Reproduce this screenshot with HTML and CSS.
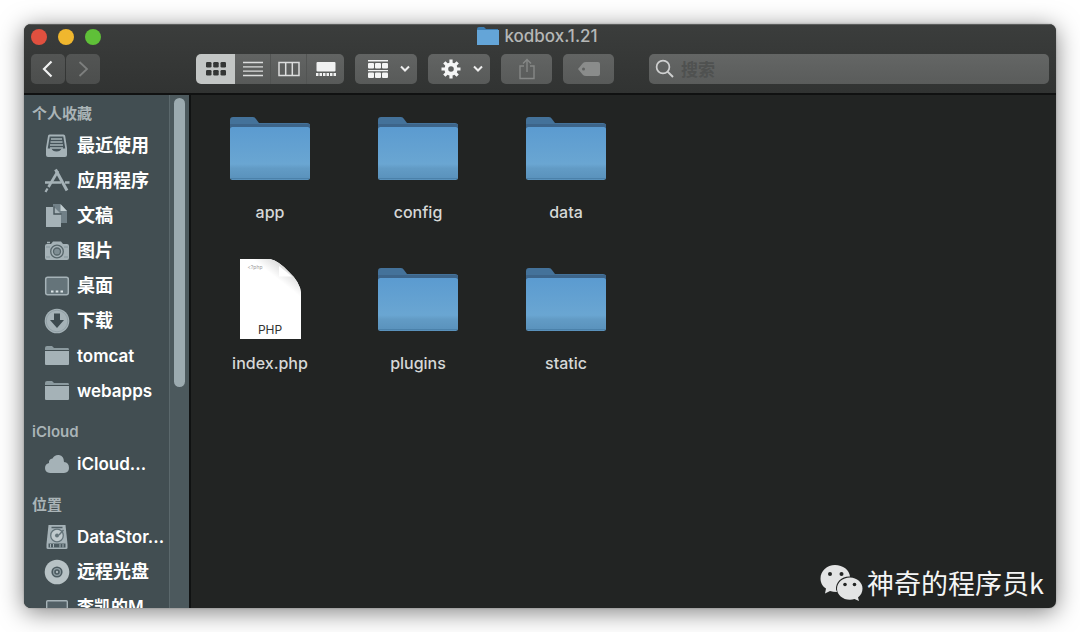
FILE: index.html
```html
<!DOCTYPE html>
<html lang="zh-CN">
<head>
<meta charset="utf-8">
<meta name="viewport" content="width=device-width, initial-scale=1">
<title>kodbox.1.21</title>
<link rel="stylesheet" href="styles.css">
</head>
<body>
<svg class="defs" width="0" height="0" aria-hidden="true">
  <defs>
    <linearGradient id="front" x1="0" y1="0" x2="0" y2="1">
      <stop offset="0" stop-color="#5b9bd0"/><stop offset=".7" stop-color="#6aa6d2"/><stop offset=".78" stop-color="#629bc5"/><stop offset="1" stop-color="#5991bb"/>
    </linearGradient>
    <linearGradient id="curl" x1="0" y1="1" x2="1" y2="0">
      <stop offset="0" stop-color="#fff"/><stop offset=".6" stop-color="#fff"/><stop offset="1" stop-color="#b4b4b4"/>
    </linearGradient>
    <symbol id="folder" viewBox="0 0 80 64">
      <path d="M0 4Q0 1 3 1H23Q25 1 26 3L29 7H77Q80 7 80 10V30H0Z" fill="#44729a"/>
      <path d="M0 8H80V12H0Z" fill="#3d658a"/>
      <rect y="11" width="80" height="53" rx="2.5" fill="url(#front)"/>
      <path d="M1 62.500H79" stroke="#4b81aa"/>
    </symbol>
    <symbol id="side-folder" viewBox="0 0 26 22">
      <path d="M1 5V3Q1 1 3 1H8L10 3H24Q25 3 25 5Z" fill="#8b9a9f"/>
      <path d="M1 6H25V19Q25 20 24 20H2Q1 20 1 19Z" fill="#a5b2b7"/>
    </symbol>
  </defs>
</svg>

<div class="window">
  <header class="header">
    <div class="titlebar">
      <div class="lights">
        <button class="light red" aria-label="关闭"></button>
        <button class="light yellow" aria-label="最小化"></button>
        <button class="light green" aria-label="全屏"></button>
      </div>
      <h1 class="title">
        <svg width="22" height="20" viewBox="0 0 22 20"><path d="M0 3Q0 1 2 1H7L9 3H21V6H0Z" fill="#3d7eb2"/><path d="M0 4H22V19H0Z" fill="#64a5d8"/></svg>
        kodbox.1.21
      </h1>
    </div>
    <div class="toolbar">
      <div class="nav">
        <button class="btn nav-btn" aria-label="后退"><svg width="14" height="20" viewBox="0 0 14 20"><path d="M10.500 2.500L3 10L10.500 17.500" fill="none" stroke="#f0f1f1" stroke-width="2.200"/></svg></button>
        <button class="btn nav-btn" aria-label="前进"><svg width="14" height="20" viewBox="0 0 14 20"><path d="M3.500 3L11 10L3.500 17" fill="none" stroke="#7d7f7e" stroke-width="1.800"/></svg></button>
      </div>
      <div class="views">
        <button class="view active" aria-label="图标"><svg width="20" height="16" viewBox="0 0 20 16" fill="#343635"><rect y="1" width="5.500" height="5.500" rx="1.300"/><rect x="7.200" y="1" width="5.500" height="5.500" rx="1.300"/><rect x="14.500" y="1" width="5.500" height="5.500" rx="1.300"/><rect y="9" width="5.500" height="5.500" rx="1.300"/><rect x="7.200" y="9" width="5.500" height="5.500" rx="1.300"/><rect x="14.500" y="9" width="5.500" height="5.500" rx="1.300"/></svg></button>
        <button class="view" aria-label="列表"><svg width="20" height="16" viewBox="0 0 20 16"><path d="M0 1.500H20M0 5.800H20M0 10.200H20M0 14.500H20" stroke="#dcdddd" stroke-width="1.300"/></svg></button>
        <button class="view" aria-label="分栏"><svg width="22" height="16" viewBox="0 0 22 16"><path d="M1 1.500H21V14.500H1ZM7.700 1.500V14.500M14.300 1.500V14.500" fill="none" stroke="#dcdddd" stroke-width="1.500"/></svg></button>
        <button class="view last" aria-label="画廊"><svg width="20" height="16" viewBox="0 0 20 16" fill="#f0f1f1"><rect x=".5" y="1" width="19" height="9.500" rx="1"/><path d="M0 12H2.500V15H0ZM3.500 12H6V15H3.500ZM7 12H9.500V15H7ZM10.500 12H13V15H10.500ZM14 12H16.500V15H14ZM17.500 12H20V15H17.500Z"/></svg></button>
      </div>
      <button class="btn menu-btn" aria-label="排列">
        <svg width="20" height="20" viewBox="0 0 20 20" fill="#f4f5f5"><path d="M0 1H20V2.500H0ZM0 11H20V12.300H0Z"/><rect y="4" width="6" height="5.500" rx="1"/><rect x="7" y="4" width="6" height="5.500" rx="1"/><rect x="14" y="4" width="6" height="5.500" rx="1"/><rect y="13.500" width="6" height="5.500" rx="1"/><rect x="7" y="13.500" width="6" height="5.500" rx="1"/><rect x="14" y="13.500" width="6" height="5.500" rx="1"/></svg>
        <svg width="10" height="8" viewBox="0 0 10 8"><path d="M1 1.500L5 5.500L9 1.500" fill="none" stroke="#eee" stroke-width="2"/></svg>
      </button>
      <button class="btn menu-btn" aria-label="操作">
        <svg width="20" height="20" viewBox="-10 -10 20 20"><g stroke="#f4f5f5" stroke-width="3.200"><path d="M0-9.500V-5M0 9.500V5M-9.500 0H-5M9.500 0H5M-6.700-6.700L-4-4M6.700-6.700L4-4M-6.700 6.700L-4 4M6.700 6.700L4 4"/></g><circle r="4.700" fill="none" stroke="#f4f5f5" stroke-width="3.800"/></svg>
        <svg width="10" height="8" viewBox="0 0 10 8"><path d="M1 1.500L5 5.500L9 1.500" fill="none" stroke="#eee" stroke-width="2"/></svg>
      </button>
      <button class="btn action" aria-label="共享"><svg width="16" height="22" viewBox="0 0 16 22"><path d="M5 8H1V20.500H15V8H11M8 14V1.500M4 5.500L8 1.500L12 5.500" fill="none" stroke="#868887" stroke-width="1.400"/></svg></button>
      <button class="btn action" aria-label="标签"><svg width="24" height="16" viewBox="0 0 24 16"><path d="M1 8L6 2Q7 1 9 1H21Q23 1 23 3V13Q23 15 21 15H9Q7 15 6 14Z" fill="#8a8c8b"/><circle cx="6.500" cy="8" r="1.500" fill="#5f6160"/></svg></button>
      <label class="search">
        <svg width="20" height="20" viewBox="0 0 20 20"><circle cx="8" cy="8" r="6.400" fill="none" stroke="#cfd0d0" stroke-width="1.700"/><path d="M12.600 12.600L18 18" stroke="#cfd0d0" stroke-width="2"/></svg>
        <input class="search-input" type="text" placeholder="搜索" aria-label="搜索">
      </label>
    </div>
  </header>

  <div class="body">
    <aside class="sidebar">
      <nav class="places">
        <h2 class="heading">个人收藏</h2>
        <a class="place cjk" href="#"><svg class="pic" viewBox="0 0 26 26"><path d="M4 3Q4 1.500 5.500 1.500H19.500Q21 1.500 21.200 3L23 15V22Q23 24 21 24H4Q2 24 2 22V15Z" fill="#a5b2b7"/><path d="M5.700 3.500H19.300L21.300 15.500H17.500Q16.500 18.500 12.500 18.500T7.500 15.500H3.700Z" fill="#46545a"/><path d="M7 6H18M6.500 9H18.500M6 12H19M6 15H19" stroke="#a5b2b7" stroke-width="1.700"/></svg>最近使用</a>
        <a class="place cjk" href="#"><svg class="pic" viewBox="0 0 26 26" fill="none" stroke="#a5b2b7"><path d="M11.500 1.500L23 22.500" stroke-width="3"/><path d="M14 3L4.500 19" stroke-width="2.600"/><path d="M3.500 20.500L1.500 24" stroke-width="2.200"/><path d="M1 14.500H17M21 14.500H25.500" stroke-width="2.600"/></svg>应用程序</a>
        <a class="place cjk" href="#"><svg class="pic" viewBox="0 0 26 26"><path d="M9 1H16L23 8V20H9Z" fill="#718087"/><path d="M16.500 1V8H23Z" fill="#c1cdd0"/><path d="M2 4H10L17 11V24H2Z" fill="#a5b2b7"/><path d="M10 3.500V11H17.500" fill="none" stroke="#46545a" stroke-width="1.400"/></svg>文稿</a>
        <a class="place cjk" href="#"><svg class="pic" viewBox="0 0 26 26"><path d="M1 8Q1 6 3 6H7L9 3.500H17L19 6H23Q25 6 25 8V20Q25 22 23 22H3Q1 22 1 20Z" fill="#a5b2b7"/><path d="M3 4.500H6" stroke="#a5b2b7" stroke-width="1.500"/><circle cx="13" cy="13.500" r="6.300" fill="none" stroke="#56656a" stroke-width="1.300"/><circle cx="13" cy="13.500" r="3.500" fill="#7f8e94" stroke="#56656a" stroke-width="1.300"/><path d="M2 9H6M20 9H24M2 19H6M20 19H24" stroke="#83949a"/></svg>图片</a>
        <a class="place cjk" href="#"><svg class="pic" viewBox="0 0 26 26"><rect x="1.700" y="4.200" width="22.600" height="17.600" rx="2" fill="#65747a" stroke="#a5b2b7" stroke-width="1.500"/><path d="M7 18.500H9.500M11.700 18.500H14.300M16.500 18.500H19" stroke="#dbe3e5" stroke-width="2.200"/></svg>桌面</a>
        <a class="place cjk" href="#"><svg class="pic" viewBox="0 0 26 26"><circle cx="13" cy="13" r="12.300" fill="#a5b2b7"/><circle cx="13" cy="13" r="10.800" fill="none" stroke="#8c9ba1" stroke-width=".8"/><path d="M10 5.500H16V12H20L13 20L6 12H10Z" fill="#3d4a4f"/></svg>下载</a>
        <a class="place" href="#"><svg class="pic pic-folder"><use href="#side-folder"/></svg>tomcat</a>
        <a class="place" href="#"><svg class="pic pic-folder"><use href="#side-folder"/></svg>webapps</a>
        <h2 class="heading later">iCloud</h2>
        <a class="place" href="#"><svg class="pic" viewBox="0 0 26 26"><path d="M6 22Q1 21.500 1 17Q1 13 5 12Q4.500 8 8.500 7.500Q10.500 3.500 15 4Q20 5 20 11Q25 11.500 25 17Q25 21.500 20 22Z" fill="#a5b2b7"/></svg>iCloud...</a>
        <h2 class="heading later">位置</h2>
        <a class="place" href="#"><svg class="pic" viewBox="0 0 26 26"><path d="M4.500 1H21.500L23.500 20V24Q23.500 25 22 25H4Q2.500 25 2.500 24V20Z" fill="#a5b2b7"/><path d="M7.500 3.500H18.500" stroke="#4f5e64" stroke-width="1.500"/><circle cx="13" cy="11.500" r="6.300" fill="#c0cacd" stroke="#64747a" stroke-width="1.300"/><circle cx="13" cy="11.500" r="2" fill="#64747a"/><path d="M19.500 6L15 11" stroke="#64747a" stroke-width="1.500"/><path d="M4.500 19.500H21.500V23.500H4.500Z" fill="#4b5a60"/><path d="M6.500 20V23.500M9.500 20V23.500M16 20V23.500M19 20V23.500" stroke="#a5b2b7"/></svg>DataStor...</a>
        <a class="place cjk" href="#"><svg class="pic" viewBox="0 0 26 26"><circle cx="13" cy="13" r="12.300" fill="#b7c2c5"/><circle cx="13" cy="13" r="5.600" fill="#4b5a60"/><circle cx="13" cy="13" r="3.400" fill="none" stroke="#8e9da2" stroke-width="1.200"/><circle cx="13" cy="13" r="1.200" fill="#aab6ba"/></svg>远程光盘</a>
        <a class="place" href="#"><svg class="pic" viewBox="0 0 26 26"><rect x="2.700" y="6.700" width="20.600" height="14" rx="1" fill="#526066" stroke="#a5b2b7" stroke-width="1.400"/><path d="M0 23H26" stroke="#a5b2b7" stroke-width="2"/></svg>李凯的M...</a>
      </nav>
      <div class="track"><div class="thumb"></div></div>
    </aside>
    <main class="files">
      <a class="file" href="#"><span class="art"><svg width="80" height="64"><use href="#folder"/></svg></span><span class="name">app</span></a>
      <a class="file" href="#"><span class="art"><svg width="80" height="64"><use href="#folder"/></svg></span><span class="name">config</span></a>
      <a class="file" href="#"><span class="art"><svg width="80" height="64"><use href="#folder"/></svg></span><span class="name">data</span></a>
      <a class="file" href="#"><span class="art"><svg width="61" height="80" viewBox="0 0 61 80"><path d="M0 0H30Q39 2 49 13Q60 23 61 34V80H0Z" fill="#fff"/><path d="M0 0H30Q39 2 49 13Q60 23 61 34V48L0 10Z" fill="url(#curl)"/><path d="M39 7V17.500H52Z" fill="#fff"/></svg><span class="php-small">&lt;?php</span><span class="php">PHP</span></span><span class="name">index.php</span></a>
      <a class="file" href="#"><span class="art"><svg width="80" height="64"><use href="#folder"/></svg></span><span class="name">plugins</span></a>
      <a class="file" href="#"><span class="art"><svg width="80" height="64"><use href="#folder"/></svg></span><span class="name">static</span></a>
    </main>
  </div>

  <div class="watermark">
    <svg width="43" height="38" viewBox="0 0 43 38"><path d="M15 1C23 1 29.500 6 30 12.500C22 12 15.500 18 16 25.500L17 28Q13 28 10 27L5 29.500L6 24.500C2 22 .5 18 .5 14.500C.5 7 7 1 15 1Z" fill="#e3e4e4"/><path d="M30 13.500C37 13.500 42.500 18.500 42.500 24.500C42.500 28 41 31 38 33.500L39 37L34.500 35Q32.500 35.700 30 35.700C22.500 35.700 17 30.700 17 24.700S22.500 13.500 30 13.500Z" fill="#e3e4e4"/><g fill="#222423"><circle cx="10" cy="10" r="2"/><circle cx="21.500" cy="10" r="2"/><circle cx="25" cy="20.500" r="1.800"/><circle cx="34.500" cy="20.500" r="1.800"/></g></svg>
    <span>神奇的程序员k</span>
  </div>
</div>
</body>
</html>
```
FILE: styles.css
```css
* { box-sizing: border-box; }

body {
  margin: 0;
  padding: 24px;
  height: 100vh;
  background: #fff;
  font-family: Inter, "Noto Sans CJK SC", sans-serif;
}

.defs { position: absolute; }

button { border: 0; padding: 0; }
a { color: inherit; text-decoration: none; }

.window {
  position: relative;
  display: flex;
  flex-direction: column;
  height: 100%;
  overflow: hidden;
  border-radius: 7px;
  background: #222423;
  box-shadow: 0 4px 24px rgba(0, 0, 0, .5), 0 0 2px rgba(0, 0, 0, .3);
}

.header {
  flex: none;
  background: linear-gradient(#3b3d3c, #313332);
  border-top: 1px solid #5c5e5d;
  border-bottom: 2px solid #101111;
}

.titlebar {
  display: grid;
  grid-template-columns: 1fr auto 1fr;
  align-items: center;
  height: 23px;
  padding: 0 7px;
}

.lights { display: flex; gap: 11px; }
.light { width: 16px; height: 16px; border-radius: 50%; }
.red { background: #e0503f; }
.yellow { background: #f0b72e; }
.green { background: #5fc038; }

.title {
  display: flex;
  align-items: center;
  gap: 5px;
  margin: 0;
  padding: 0 5px 2px 0;
  font-size: 17px;
  line-height: 20px;
  font-weight: 500;
  color: #b5b7b6;
}

.toolbar {
  display: flex;
  gap: 11px;
  padding: 6px 7px 9px;
}

.btn, .view {
  flex: none;
  display: flex;
  align-items: center;
  justify-content: center;
  height: 30px;
  background: linear-gradient(#626463, #585a59);
}
.btn { border-radius: 5px; }

.nav { flex: none; display: flex; gap: 1px; margin-right: 85px; }
.nav-btn { width: 34px; background: linear-gradient(#535554, #4c4e4d); }

.views { flex: none; display: flex; border-radius: 5px; overflow: hidden; }
.view { width: 36px; border-right: 1px solid #525453; }
.view.active { width: 39px; border-right: 0; background: #c3c6c5; }
.view.last { width: 37px; border-right: 0; }

.menu-btn { width: 62px; gap: 12px; padding-left: 5px; }
.action { width: 51px; }

.search {
  flex: 1;
  min-width: 0;
  display: flex;
  align-items: center;
  gap: 6px;
  height: 30px;
  margin-left: 24px;
  padding: 0 6px;
  border-radius: 5px;
  background: linear-gradient(#646665, #5a5c5b);
}
.search svg { flex: none; }
.search-input {
  flex: 1;
  min-width: 0;
  border: 0;
  padding: 0;
  outline: 0;
  background: none;
  font: 700 17px/24px "Noto Sans CJK SC", sans-serif;
  color: #eee;
}
.search-input::placeholder { color: #4f5150; opacity: 1; }

.body { flex: 1; display: flex; min-height: 0; }

.sidebar {
  flex: none;
  display: flex;
  width: 167px;
  border-right: 2px solid #101212;
  background: #424e52;
}
.places {
  flex: 1;
  min-width: 0;
  padding: 5px 0 0 8px;
  overflow: hidden;
}
.heading {
  margin: 0;
  font-size: 15px;
  line-height: 28px;
  font-weight: 600;
  color: #aab4b7;
}
.later { margin-top: 10px; }
.place {
  display: flex;
  align-items: center;
  gap: 7px;
  height: 35px;
  padding-left: 12px;
  font-size: 17px;
  line-height: 24px;
  font-weight: 600;
  white-space: nowrap;
  color: #fff;
}
.cjk { font-size: 18px; }
.pic { flex: none; width: 26px; height: 26px; }
.pic-folder { height: 22px; }

.track {
  width: 20px;
  padding: 3px 4px;
  border-left: 1px solid #5b686c;
  background: #4c595d;
}
.thumb { height: 57%; border-radius: 6px; background: #9cabb0; }

.files {
  flex: 1;
  display: grid;
  grid-template-columns: repeat(auto-fill, 148px);
  grid-auto-rows: 116px;
  row-gap: 35px;
  max-width: 480px;
  padding: 13px 5px;
}
.file { display: flex; flex-direction: column; align-items: center; gap: 12px; }
.art { position: relative; display: flex; align-items: center; height: 80px; }
.name { font-size: 16px; line-height: 24px; font-weight: 500; color: #d6d8d7; }
.php {
  position: absolute;
  inset: auto 0 0;
  text-align: center;
  font-size: 12px;
  line-height: 18px;
  color: #333;
}
.php-small {
  position: absolute;
  top: 4px;
  left: 8px;
  font-size: 5px;
  line-height: 8px;
  color: #999;
}

.watermark {
  position: absolute;
  right: 12px;
  bottom: 6px;
  display: flex;
  align-items: center;
  gap: 4px;
  font-family: "Noto Sans CJK SC", sans-serif;
  font-size: 27px;
  line-height: 38px;
  color: #f4f5f5;
}
```
